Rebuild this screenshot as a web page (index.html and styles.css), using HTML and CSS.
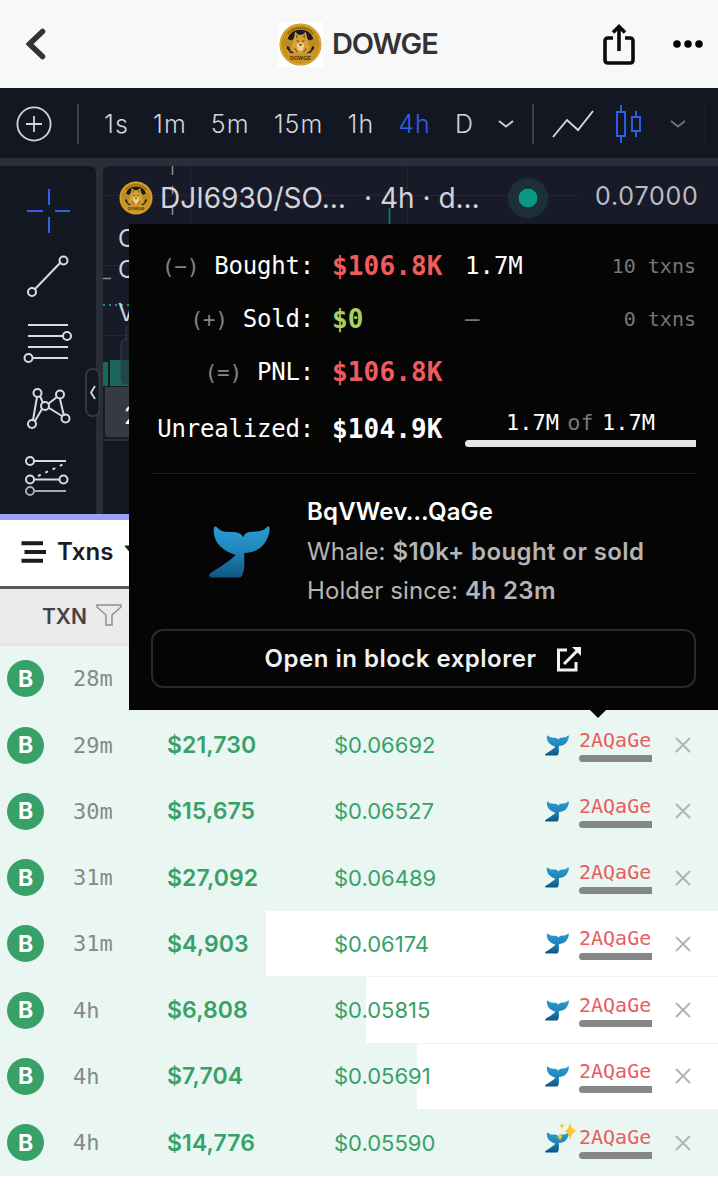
FILE: index.html
```html
<!DOCTYPE html>
<html lang="en">
<head>
    <meta charset="UTF-8">
    <meta name="viewport" content="width=device-width, initial-scale=1.0">
    <title>DOWGE</title>
    <link rel="stylesheet" href="styles.css">
</head>
<body>
    <!-- Shared icons -->
    <svg class="icon-defs" width="0" height="0">
        <defs>
            <linearGradient id="whale-fill" x1="0" y1="0" x2="0" y2="1">
                <stop offset="0" stop-color="#2b9bd3"/>
                <stop offset="0.45" stop-color="#2088be"/>
                <stop offset="1" stop-color="#105580"/>
            </linearGradient>
            <radialGradient id="coin-fill">
                <stop offset="0" stop-color="#e8b53c"/>
                <stop offset="1" stop-color="#c18a12"/>
            </radialGradient>
        </defs>
        <symbol id="coin" viewBox="0 0 44 44">
            <circle cx="22" cy="22" r="21.5" fill="url(#coin-fill)"/>
            <circle cx="22" cy="22" r="20.3" fill="none" stroke="#ebc35e" stroke-width="0.8"/>
            <path d="M9 11a17 17 0 0 1 26 0" fill="none" stroke="#7b5708" stroke-width="1.8" stroke-dasharray="1.3 0.7"/>
            <path d="M8 26C7 12 14 7 22 7s15 5 14 19l-4 5H12z" fill="#1a1d22"/>
            <path d="M3 18l5-2 5 2 3-3 3 7-2 9-5-2-2-5-6-1zM41 18l-5-2-5 2-3-3-3 7 2 9 5-2 2-5 6-1z" fill="#bf8a22"/>
            <path d="M16.500 9l3.500 3h4l3.500-3 2 10 2 7-4 6h-11l-4-6 2-7z" fill="#d6a135"/>
            <path d="M17.500 11l2 3-2 2zM26.500 11l-2 3 2 2z" fill="#85600f"/>
            <path d="M18 22l4-2 4 2-1.500 5-2.500 2-2.500-2z" fill="#efd596"/>
            <path d="M18 18l2.500 1M26 18l-2.500 1M21 22h2l-1 1.500zM16 26l3 4M28 26l-3 4" stroke="#5a4010" fill="#423009"/>
            <path d="M7 31h30l-5 9H12z" fill="#cb9624"/>
        </symbol>
        <symbol id="whale" viewBox="0 0 62 54">
            <path d="M5 2C7-1 9 4 14 6c7 2 16-2 21 6 2-8 12-4 19-7 4-1 5-5 7-4 2 3-1 14-7 20-5 5-11 7-18 7-1 6 1 13-1 19-1 4-2 6-5 6L3 53c-3 0-4-3-1-5 8-5 18-11 25-18C13 26 3 16 5 2z" fill="url(#whale-fill)"/>
        </symbol>
        <symbol id="close" viewBox="0 0 16 16">
            <path d="M1.500 1.500l13 13M14.500 1.500l-13 13" fill="none" stroke="#aeb4b1" stroke-width="1.900" stroke-linecap="round"/>
        </symbol>
    </svg>

    <header class="top-bar">
        <svg class="back" viewBox="0 0 20 32"><path d="M16.500 3.500L3.500 16l13 12.500" fill="none" stroke="#333" stroke-width="5.500" stroke-linecap="round"/></svg>
        <div class="brand">
            <span class="brand-logo"><svg viewBox="0 0 44 44"><use href="#coin"/><text x="22" y="38" text-anchor="middle" class="coin-text">DOWGE</text></svg></span>
            <h1>DOWGE</h1>
        </div>
        <svg class="share" viewBox="0 0 32 42"><path d="M10 15H5q-3 0-3 3v19q0 3 3 3h22q3 0 3-3V18q0-3-3-3h-5M16 28V4M10 9.500L16 3.500 22 9.500" fill="none" stroke="#0b0b0b" stroke-width="3.600"/></svg>
        <svg class="more" viewBox="0 0 30 8"><g fill="#000"><circle cx="4" cy="4" r="3.800"/><circle cx="15" cy="4" r="3.800"/><circle cx="26" cy="4" r="3.800"/></g></svg>
    </header>

    <section class="chart">
        <div class="intervals">
            <svg class="add" viewBox="0 0 36 36" fill="none" stroke="#d1d4dc" stroke-width="1.800"><circle cx="18" cy="18" r="16.600"/><path d="M10 18h16M18 10v16"/></svg>
            <i class="sep"></i>
            <div class="times">
                <span>1s</span><span>1m</span><span>5m</span><span>15m</span><span>1h</span><span class="active">4h</span><span>D</span>
            </div>
            <svg class="chevron" viewBox="0 0 16 8"><path d="M1 1l7 5.500L15 1" fill="none" stroke="#c9ccd4" stroke-width="1.900"/></svg>
            <i class="sep"></i>
            <svg class="line-icon" viewBox="0 0 42 28"><path d="M1 27l14-17 11 10L41 1" fill="none" stroke="#d5d8e0" stroke-width="1.900"/></svg>
            <svg class="candles" viewBox="0 0 26 38" fill="none" stroke="#2f5fef" stroke-width="1.900"><path d="M1 7h8v24H1zM5 0v7M5 31v7M16 12h8v14h-8zM20 6v6M20 26v6"/></svg>
            <svg class="chevron dim" viewBox="0 0 16 8"><path d="M1 1l7 5.500L15 1" fill="none" stroke="#6d717d" stroke-width="1.900"/></svg>
            <i class="sep faint"></i>
        </div>
        <div class="chart-body">
            <div class="tools">
                <svg class="tool-icons" viewBox="0 0 96 348" fill="none" stroke="#d8dbe4" stroke-width="2">
                    <path d="M49 23v16M49 51v16M27 45h16M55 45h15" stroke="#2f5fef"/>
                    <path d="M35 123l26-27M28 159h40M28 170h35M28 181h40M33 192h35"/>
                    <circle cx="63.500" cy="94.500" r="4"/><circle cx="32" cy="126" r="4"/><circle cx="67" cy="170" r="4"/><circle cx="28.500" cy="192" r="4"/>
                    <path d="M37 231l-4 23M40 230l3 7M48 238l9-7M49 242l13 8M60 233l4 17M35 255l7-12"/>
                    <circle cx="37.500" cy="227" r="4"/><circle cx="60" cy="228.500" r="4"/><circle cx="45" cy="240" r="4"/><circle cx="65.500" cy="252.500" r="4"/><circle cx="32" cy="258" r="4"/>
                    <path d="M34 295h32M34 313.500h25"/><path d="M34 325h32" stroke="#a8abb3"/>
                    <path d="M38 310l26-12" stroke-dasharray="3 5"/>
                    <circle cx="30" cy="295" r="4"/><circle cx="30" cy="313.500" r="4"/><circle cx="63.500" cy="313.500" r="4"/><circle cx="30" cy="325" r="4" stroke="#a8abb3"/>
                </svg>
                <svg class="collapse" viewBox="0 0 15 49"><rect x="1" y="1" width="13.500" height="47" rx="6.500" fill="#131722" stroke="#353944" stroke-width="1.800"/><path d="M10 18l-4 6.500 4 6.500" fill="none" stroke="#d1d4dc" stroke-width="1.900"/></svg>
            </div>
            <div class="pane">
                <svg class="plot" viewBox="0 0 615 348">
                    <path d="M0 29.500h475M0 99.500h615M0 169.500h615M87.500 0v348M304.500 0v348" stroke="#242733" fill="none"/>
                    <path d="M69.500 0v9M69.500 20v8M69.500 40v9M0 112.500h8" stroke="#8c8f99" stroke-width="1.500"/>
                    <path d="M286.500 42v20" stroke="#0c7868" stroke-width="1.800"/>
                    <path d="M0 139h30" stroke="#248f80" stroke-width="1.800" stroke-dasharray="2 4"/>
                    <path d="M0 196h5v24H0zM7 194h30v26H7z" fill="#1c655a"/>
                    <path d="M2 221h40v50H5q-3 0-3-3z" fill="#363a45"/>
                    <path d="M0 274h40v74H0z" fill="#131722"/>
                    <path d="M0 274h615" stroke="#2a2e39" stroke-width="2"/>
                    <path d="M33 218H22q-4 0-4-4v-35q0-6 6-6h10M23 173v-9q0-5 5-5" fill="#252a35" fill-opacity="0.500" stroke="#3a3e49"/>
                </svg>
                <div class="symbol">
                    <svg class="symbol-logo" viewBox="0 0 44 44"><use href="#coin"/><text x="22" y="38" text-anchor="middle" class="coin-text">DOWGE</text></svg>
                    <span class="pair">DJI6930/SO…</span>
                    <span class="detail">· 4h · d…</span>
                    <i class="status"></i>
                    <span class="axis-price">0.07000</span>
                </div>
                <div class="legend"><span>O</span><span>C</span><span class="volume">V</span></div>
                <span class="date-label">2</span>
            </div>
        </div>
    </section>

    <section class="trades">
        <div class="tabs">
            <svg class="list-icon" viewBox="0 0 25 22"><path d="M2.500 2.200H20M5.500 11H23M2.500 19.800H20" stroke="#1c1c1c" stroke-width="4" stroke-linecap="square"/></svg>
            <span>Txns</span>
            <svg class="caret" viewBox="0 0 12 8"><path d="M1 1h10L6 7z" fill="#1c1c1c" stroke="#1c1c1c" stroke-linejoin="round"/></svg>
        </div>
        <div class="table-head">
            <span>TXN</span>
            <svg viewBox="0 0 26 22"><path d="M1 1h24v2l-9 8v10h-6V11L1 3z" fill="none" stroke="#909090" stroke-width="1.500"/></svg>
        </div>
        <div class="row">
            <b class="side">B</b><span class="age">28m</span>
        </div>
        <div class="row">
            <b class="side">B</b><span class="age">29m</span><b class="usd">$21,730</b><span class="price">$0.06692</span>
            <svg class="whale"><use href="#whale"/></svg><span class="maker">2AQaGe</span><svg class="close"><use href="#close"/></svg>
        </div>
        <div class="row">
            <b class="side">B</b><span class="age">30m</span><b class="usd">$15,675</b><span class="price">$0.06527</span>
            <svg class="whale"><use href="#whale"/></svg><span class="maker">2AQaGe</span><svg class="close"><use href="#close"/></svg>
        </div>
        <div class="row">
            <b class="side">B</b><span class="age">31m</span><b class="usd">$27,092</b><span class="price">$0.06489</span>
            <svg class="whale"><use href="#whale"/></svg><span class="maker">2AQaGe</span><svg class="close"><use href="#close"/></svg>
        </div>
        <div class="row" style="background-size: 266px 100%">
            <b class="side">B</b><span class="age">31m</span><b class="usd">$4,903</b><span class="price">$0.06174</span>
            <svg class="whale"><use href="#whale"/></svg><span class="maker">2AQaGe</span><svg class="close"><use href="#close"/></svg>
        </div>
        <div class="row" style="background-size: 366px 100%">
            <b class="side">B</b><span class="age">4h</span><b class="usd">$6,808</b><span class="price">$0.05815</span>
            <svg class="whale"><use href="#whale"/></svg><span class="maker">2AQaGe</span><svg class="close"><use href="#close"/></svg>
        </div>
        <div class="row" style="background-size: 417px 100%">
            <b class="side">B</b><span class="age">4h</span><b class="usd">$7,704</b><span class="price">$0.05691</span>
            <svg class="whale"><use href="#whale"/></svg><span class="maker">2AQaGe</span><svg class="close"><use href="#close"/></svg>
        </div>
        <div class="row">
            <b class="side">B</b><span class="age">4h</span><b class="usd">$14,776</b><span class="price">$0.05590</span>
            <svg class="whale"><use href="#whale"/></svg><span class="maker">2AQaGe</span><svg class="close"><use href="#close"/></svg>
            <svg class="sparkles" viewBox="0 0 20 20"><path d="M13 0q1 8 7 9-6 1-7 10-1-9-6-10 5-1 6-9zM5 0q0 3 3 4-3 0-3 3-1-3-3-3 3-1 3-4zM3 11q1 3 3 4-2 0-3 4-1-4-3-4 2-1 3-4z" fill="#fbc928"/></svg>
        </div>
    </section>

    <!-- Maker popup -->
    <aside class="popup">
        <div class="stat">
            <span class="label"><i>(−)</i> Bought:</span><b class="red">$106.8K</b><span class="amount">1.7M</span><span class="txns">10 txns</span>
        </div>
        <div class="stat">
            <span class="label"><i>(+)</i> Sold:</span><b class="green">$0</b><span class="amount none">–</span><span class="txns">0 txns</span>
        </div>
        <div class="stat">
            <span class="label"><i>(=)</i> PNL:</span><b class="red">$106.8K</b>
        </div>
        <div class="stat unrealized">
            <span class="label">Unrealized:</span><b>$104.9K</b>
            <span class="holding">1.7M <i>of</i> 1.7M</span>
        </div>
        <div class="wallet">
            <svg class="wallet-whale"><use href="#whale"/></svg>
            <div class="wallet-info">
                <h2>BqVWev…QaGe</h2>
                <p>Whale: <b>$10k+ bought or sold</b></p>
                <p>Holder since: <b>4h 23m</b></p>
            </div>
        </div>
        <div class="explorer">
            <span>Open in block explorer</span>
            <svg viewBox="0 0 26 26" fill="none" stroke="#f2f2f2" stroke-width="3"><path d="M11 4H2.500v20H20v-8M8 18L21 5"/><path d="M16 1h9v9z" fill="#f2f2f2" stroke="none"/></svg>
        </div>
    </aside>
</body>
</html>
```

FILE: styles.css
```css
* {
    box-sizing: border-box;
}

body {
    position: relative;
    margin: 0;
    width: 718px;
    height: 1200px;
    overflow: hidden;
    background: #fff;
    font-family: Inter, "Liberation Sans", sans-serif;
}

svg {
    display: block;
    flex: none;
}

i {
    font-style: normal;
}

.icon-defs {
    position: absolute;
}

.coin-text {
    font: bold 5.5px "Liberation Sans", sans-serif;
    letter-spacing: 0;
    fill: #4a3204;
}

/* Top bar */
.top-bar {
    display: flex;
    align-items: center;
    height: 88px;
    padding-left: 26px;
    background: #f8f8f8;
}

.back {
    width: 20px;
    height: 32px;
}

.brand {
    display: flex;
    align-items: center;
    width: 557px;
    padding-left: 232px;
}

.brand-logo {
    padding: 1px;
    background: #fff;
}

.brand-logo svg {
    width: 43px;
    height: 43px;
}

.brand h1 {
    margin: 0 0 0 9px;
    font-size: 29px;
    line-height: 40px;
    font-weight: 600;
    letter-spacing: -1.1px;
    color: #333;
}

.share {
    width: 32px;
    height: 42px;
}

.more {
    width: 30px;
    height: 8px;
    margin-left: 38px;
}

/* Chart */
.chart {
    height: 432px;
    background: #2a2e39;
    border-bottom: 6px solid #97a2f5;
    color: #d1d4dc;
}

.intervals {
    display: flex;
    align-items: center;
    height: 70px;
    padding: 2px 0 0 16px;
    background: #131722;
    font-size: 25px;
    font-weight: 300;
}

.add {
    width: 36px;
    height: 36px;
    margin-right: 25px;
}

.sep {
    width: 2px;
    height: 40px;
    background: #3d414c;
}

.sep.faint {
    margin-left: 19px;
    width: 1px;
    background: #20242f;
}

.times {
    display: flex;
    gap: 24px;
    width: 396px;
    margin-right: 23px;
    padding-left: 25px;
    white-space: nowrap;
    letter-spacing: 1.1px;
}

.active {
    color: #2f5fef;
}

.chevron {
    width: 16px;
    height: 8px;
    margin-right: 18px;
}

.line-icon {
    width: 42px;
    height: 28px;
    margin-left: 18px;
}

.candles {
    width: 26px;
    height: 38px;
    margin-left: 22px;
}

.chevron.dim {
    margin: 0 0 0 28px;
}

.chart-body {
    display: flex;
    gap: 7px;
    height: 356px;
    padding-top: 8px;
}

.tools {
    position: relative;
    width: 96px;
    background: #131722;
    border-radius: 0 6px 0 0;
}

.tool-icons {
    width: 96px;
    height: 348px;
}

.collapse {
    position: absolute;
    top: 202px;
    right: -4px;
    width: 15px;
    height: 49px;
}

.pane {
    position: relative;
    flex: 1;
    background: #181b27;
    border-radius: 6px 0 0 0;
    overflow: hidden;
}

.plot {
    position: absolute;
    inset: 0;
    width: 615px;
    height: 348px;
}

.symbol {
    position: relative;
    display: flex;
    align-items: center;
    height: 63px;
    padding-left: 16px;
    font-size: 28px;
    white-space: nowrap;
}

.symbol-logo {
    width: 34px;
    height: 34px;
}

.pair {
    width: 211px;
    padding-left: 7px;
}

.detail {
    width: 144px;
}

.status {
    width: 40px;
    height: 40px;
    background: radial-gradient(circle, #089981 9px, #1a2f37 9.7px);
    border-radius: 50%;
}

.axis-price {
    margin: -3px 0 0 47px;
    font-size: 25px;
    letter-spacing: 0.8px;
    color: #b9bbc5;
}

.legend {
    position: relative;
    display: flex;
    flex-direction: column;
    padding-left: 15px;
    margin-top: -6px;
    font-size: 24px;
    line-height: 31px;
}

.volume {
    margin-top: 12px;
}

.date-label {
    position: absolute;
    top: 235px;
    left: 21px;
    font-size: 24px;
    color: #fff;
}

/* Trades */
.tabs {
    display: flex;
    align-items: center;
    height: 69px;
    padding: 0 0 3px 21px;
    border-bottom: 3px solid #565a58;
    font-size: 24px;
    font-weight: 600;
    color: #1c1c1c;
}

.list-icon {
    width: 25px;
    height: 22px;
    margin-right: 11px;
}

.caret {
    width: 12px;
    height: 8px;
    margin: -6px 0 0 11px;
}

.table-head {
    display: flex;
    align-items: center;
    height: 57px;
    padding: 0 0 1px 42px;
    background: #ebebeb;
    border-bottom: 2px solid #e2e5e4;
    font-size: 21px;
    font-weight: 600;
    color: #444;
}

.table-head svg {
    width: 26px;
    height: 22px;
    margin: -2px 0 0 9px;
}

.row {
    position: relative;
    display: flex;
    align-items: center;
    height: 66.25px;
    padding: 0.5px 0 0 7px;
    border-bottom: 1.5px solid #f0f3f1;
    background: linear-gradient(#eaf6f1, #eaf6f1) no-repeat;
    white-space: nowrap;
}

.side {
    display: flex;
    align-items: center;
    justify-content: center;
    width: 37px;
    height: 37px;
    margin-right: 29px;
    border-radius: 50%;
    background: #38a169;
    color: #fff;
    font-size: 23px;
}

.age {
    width: 94px;
    font: 22px "DejaVu Sans Mono", monospace;
    color: #838a87;
}

.usd {
    width: 167px;
    font-size: 23px;
    font-weight: 600;
    letter-spacing: 0.1px;
    color: #38a169;
}

.price {
    width: 211px;
    font-size: 22px;
    color: #38a169;
}

.whale {
    width: 24px;
    height: 21px;
    margin-right: 10px;
}

.maker {
    width: 73px;
    height: 33px;
    margin-right: 23px;
    font: 20px/22px "DejaVu Sans Mono", monospace;
    color: #e75d61;
}

.maker::after,
.holding::after {
    content: "";
    display: block;
    height: 7px;
    margin-top: 4px;
    background: #858786;
    border-radius: 4px 0 0 4px;
}

.close {
    width: 16px;
    height: 16px;
}

.sparkles {
    position: absolute;
    left: 557px;
    top: 12px;
    width: 20px;
    height: 20px;
}

/* Maker popup */
.popup {
    position: absolute;
    top: 224px;
    left: 129px;
    width: 589px;
    height: 486px;
    padding: 15px 22px 0;
    background: #050505;
    color: #fff;
    font-family: "DejaVu Sans Mono", monospace;
}

.popup::after {
    content: "";
    position: absolute;
    left: 461px;
    top: 486px;
    border: 8px solid transparent;
    border-top-color: #050505;
    border-bottom: 0;
}

.stat {
    display: flex;
    align-items: center;
    height: 53px;
    font-size: 24px;
    white-space: nowrap;
}

.label {
    display: flex;
    align-items: baseline;
    justify-content: flex-end;
    width: 163px;
    letter-spacing: -0.2px;
}

.label i {
    margin-right: 15px;
    color: #858585;
    font-size: 21px;
}

.stat b {
    width: 151px;
    padding-left: 18px;
    font-size: 26px;
    letter-spacing: 0.15px;
}

.stat .red {
    color: #f05b5e;
}

.stat .green {
    color: #a9cf5d;
}

.amount.none {
    color: #777;
}

.txns {
    margin-left: auto;
    font-size: 20px;
    color: #777;
}

.unrealized {
    height: 61px;
}

.holding {
    width: 231px;
    height: 37px;
    font-size: 22px;
    line-height: 26px;
    text-align: center;
    word-spacing: -5px;
}

.holding::after {
    background: #e5e5e5;
}

.holding i {
    color: #777;
}

.wallet {
    display: flex;
    align-items: center;
    height: 156px;
    margin-top: 14px;
    border-top: 1px solid #1d1d1d;
    font-family: Inter, "Liberation Sans", sans-serif;
}

.wallet-whale {
    width: 61px;
    height: 54px;
    margin: 0 37px 0 58px;
}

.wallet-info {
    margin-top: -2px;
}

.wallet h2 {
    margin: 0;
    font-size: 24px;
    line-height: 40px;
    font-weight: 600;
    letter-spacing: 0.2px;
}

.wallet p {
    margin: 0;
    font-size: 24px;
    line-height: 39px;
    letter-spacing: 0.1px;
    white-space: nowrap;
    color: #b5b5b5;
}

.wallet p b {
    font-weight: 600;
    letter-spacing: 0.4px;
}

.explorer {
    display: flex;
    align-items: center;
    justify-content: center;
    height: 59px;
    border: 2px solid #2a2a2a;
    border-radius: 12px;
    font: 600 24px Inter, "Liberation Sans", sans-serif;
    letter-spacing: 0.5px;
    color: #f2f2f2;
}

.explorer svg {
    width: 26px;
    height: 26px;
    margin-left: 20px;
}
```
